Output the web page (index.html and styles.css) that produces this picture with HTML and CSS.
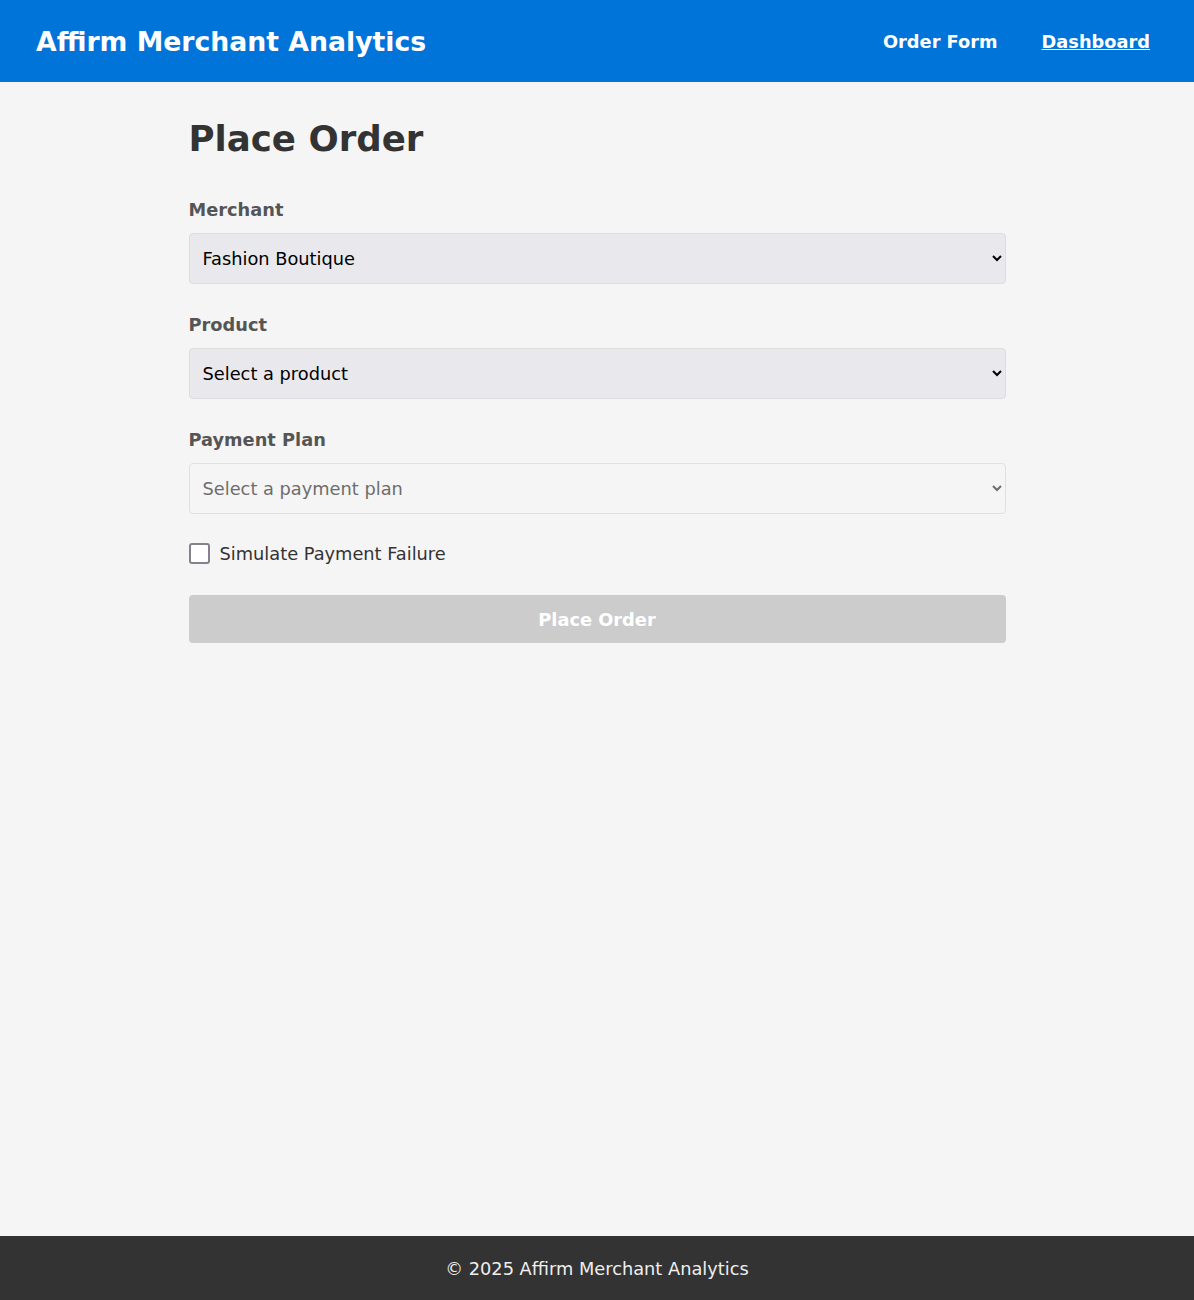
FILE: index.html
```html
<!DOCTYPE html>
<html lang="en">
<head>
<meta charset="utf-8">
<title>Affirm Merchant Analytics</title>
<link rel="stylesheet" href="styles.css">
</head>
<body>
<div class="app">
  <header class="topbar">
    <div class="brand">Affirm Merchant Analytics</div>
    <nav class="nav">
      <a class="nav-link" href="#">Order Form</a>
      <a class="nav-link active" href="#">Dashboard</a>
    </nav>
  </header>
  <main class="main">
    <div class="container">
      <h1 class="title">Place Order</h1>
      <form class="order-form">
        <div class="field">
          <label class="field-label" for="merchant">Merchant</label>
          <select id="merchant" class="field-select">
            <option>Fashion Boutique</option>
          </select>
        </div>
        <div class="field">
          <label class="field-label" for="product">Product</label>
          <select id="product" class="field-select">
            <option>Select a product</option>
          </select>
        </div>
        <div class="field">
          <label class="field-label" for="plan">Payment Plan</label>
          <select id="plan" class="field-select" disabled>
            <option>Select a payment plan</option>
          </select>
        </div>
        <label class="check-row">
          <input type="checkbox" class="check-box">
          <span class="check-text">Simulate Payment Failure</span>
        </label>
        <button type="button" class="submit-btn" disabled>Place Order</button>
      </form>
    </div>
  </main>
  <footer class="footer">© 2025 Affirm Merchant Analytics</footer>
</div>
</body>
</html>
```
FILE: styles.css
```css
* { box-sizing: border-box; }
html, body { margin: 0; padding: 0; }
body {
  font-family: "DejaVu Sans", sans-serif;
  background: #f5f5f5;
  color: #333;
}
.app {
  min-height: 100vh;
  display: flex;
  flex-direction: column;
}
.topbar {
  height: 82px;
  background: #0074d9;
  display: flex;
  align-items: center;
  justify-content: space-between;
  padding: 0 36px;
  color: #fff;
}
.brand {
  font-size: 26.7px;
  font-weight: bold;
}
.nav {
  display: flex;
  gap: 28px;
}
.nav-link {
  color: #fff;
  text-decoration: none;
  font-weight: bold;
  font-size: 17.8px;
  padding: 8px;
}
.nav-link.active { text-decoration: underline; }
.main {
  flex: 1;
  padding-top: 36px;
}
.container {
  width: 817px;
  margin: 0 auto;
}
.title {
  margin: 0 0 40px;
  font-size: 35.6px;
  color: #333;
}
.order-form {
  display: flex;
  flex-direction: column;
}
.field { margin-bottom: 29.8px; }
.field-label {
  display: block;
  font-weight: bold;
  font-size: 17.8px;
  color: #555;
  margin-bottom: 13px;
}
.field-select {
  display: block;
  width: 100%;
  height: 51px;
  font-family: "DejaVu Sans", sans-serif;
  font-size: 17.8px;
  padding: 0 17px 0 9px;
  border: 1px solid #ddd;
  border-radius: 4px;
  background-color: #e9e9ed;
  color: #000;
}
.field-select:disabled {
  background-color: #f5f5f5;
  color: #6d6d6d;
  -webkit-text-fill-color: #6d6d6d;
  opacity: 1;
  border-color: #e0e0e0;
}
.check-row {
  display: flex;
  align-items: center;
  gap: 10px;
  font-size: 17.8px;
  color: #333;
}
.check-box {
  appearance: none;
  -webkit-appearance: none;
  width: 21px;
  height: 21px;
  margin: 0;
  border: 2px solid #85818f;
  border-radius: 3px;
  background: #fff;
}
.submit-btn {
  margin-top: 31px;
  width: 100%;
  height: 48px;
  padding: 0 14px;
  border: none;
  border-radius: 4px;
  background: #ccc;
  color: #fff;
  font-family: "DejaVu Sans", sans-serif;
  font-size: 17.8px;
  font-weight: bold;
}
.footer {
  background: #333;
  color: #eee;
  text-align: center;
  font-size: 17.8px;
  height: 64px;
  display: flex;
  align-items: center;
  justify-content: center;
}
```
